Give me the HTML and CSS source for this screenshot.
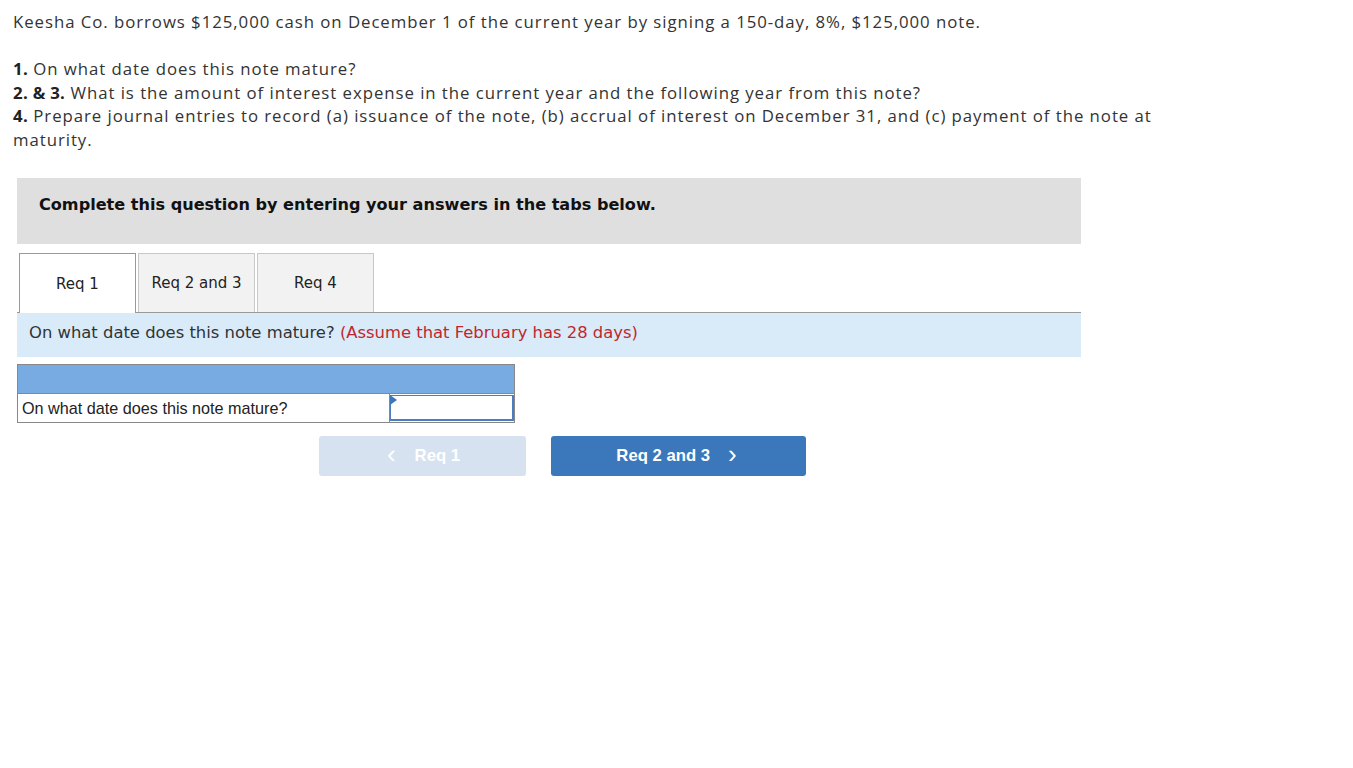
FILE: index.html
```html
<!DOCTYPE html>
<html>
<head>
<meta charset="utf-8">
<link rel="stylesheet" href="styles.css">
</head>
<body>
<div class="question">
  <p class="intro">Keesha Co. borrows $125,000 cash on December 1 of the current year by signing a 150-day, 8%, $125,000 note.</p>
  <p class="reqs"><b>1.</b> On what date does this note mature?<br><b>2. &amp; 3.</b> What is the amount of interest expense in the current year and the following year from this note?<br><b>4.</b> Prepare journal entries to record (a) issuance of the note, (b) accrual of interest on December 31, and (c) payment of the note at<br>maturity.</p>
</div>
<div class="panel">
  <div class="banner">Complete this question by entering your answers in the tabs below.</div>
  <div class="tabs">
    <div class="tab active">Req 1</div>
    <div class="tab">Req 2 and 3</div>
    <div class="tab">Req 4</div>
  </div>
  <div class="info">On what date does this note mature? <span class="note">(Assume that February has 28 days)</span></div>
  <table class="grid">
    <tr class="head"><td colspan="2"></td></tr>
    <tr class="row"><td class="label">On what date does this note mature?</td><td class="inputcell"><div class="input"><span class="flag"></span></div></td></tr>
  </table>
  <div class="nav">
    <div class="btn prev"><span class="chev">&lsaquo;</span>Req 1</div>
    <div class="btn next">Req 2 and 3<span class="chev r">&rsaquo;</span></div>
  </div>
</div>
</body>
</html>
```
FILE: styles.css
```css
html, body { margin: 0; padding: 0; background: #fff; }
body { padding: 10px 13px; width: 1327px; }
.question { font-family: "Open Sans", Lato, sans-serif; font-size: 16.8px; letter-spacing: 0.95px; line-height: 23.4px; color: #333; width: 1140px; }
.question p { margin: 0; }
.intro { margin-bottom: 24px !important; }
.reqs b { font-weight: 700; color: #222; letter-spacing: 0.3px; }
.panel { margin-top: 27px; margin-left: 4px; width: 1064px; }
.banner { background: #dfdfdf; height: 66px; box-sizing: border-box; padding: 17px 22px; font-family: "DejaVu Sans", Verdana, sans-serif; font-weight: 700; font-size: 16.1px; color: #111; }
.tabs { display: flex; gap: 2px; padding-left: 2px; margin-top: 9px; border-bottom: 1px solid #999; height: 59px; }
.tab { width: 117px; height: 59px; box-sizing: border-box; border: 1px solid #c8c8c8; border-bottom: none; background: #f2f2f2; font-family: "DejaVu Sans", Verdana, sans-serif; font-size: 15px; color: #222; display: flex; align-items: center; justify-content: center; }
.tab.active { background: #fff; border-color: #999; height: 60px; }
.info { background: #d9ebf9; height: 44px; box-sizing: border-box; padding: 10px 12px; font-family: "DejaVu Sans", Verdana, sans-serif; font-size: 16.4px; color: #333; }
.note { color: #c0272d; }
.grid { border-collapse: collapse; margin-top: 7px; width: 498px; font-family: "Liberation Sans", Arial, sans-serif; font-size: 16.2px; color: #222; }
.grid td { padding: 0; border: 1px solid #888; }
.head td { background: #79abe3; height: 28px; }
.row td { height: 28px; }
.label { padding-left: 4px !important; width: 368px; }
.inputcell { width: 124px; }
.input { position: relative; height: 26px; border: 2px solid #4a7ec0; margin: 0; background: #fff; box-sizing: border-box; border-top-width: 1px; border-left-width: 1px; }
.flag { position: absolute; left: -1px; top: -1px; width: 0; height: 0; border-top: 5px solid transparent; border-bottom: 5px solid transparent; border-left: 7px solid #3a77bb; }
.nav { display: flex; margin-top: 13px; margin-left: 302px; gap: 25px; }
.btn { height: 40px; border-radius: 3px; display: flex; align-items: center; justify-content: center; font-family: "Liberation Sans", Arial, sans-serif; font-weight: 700; font-size: 16.7px; color: #fff; box-sizing: border-box; }
.prev { width: 207px; background: #d6e2f0; padding-left: 2px; }
.next { width: 255px; background: #3a77bb; padding-right: 4px; }
.chev { font-size: 26px; font-weight: 400; margin-right: 19px; line-height: 1; position: relative; top: -2px; }
.chev.r { margin-right: 0; margin-left: 18px; }
```
